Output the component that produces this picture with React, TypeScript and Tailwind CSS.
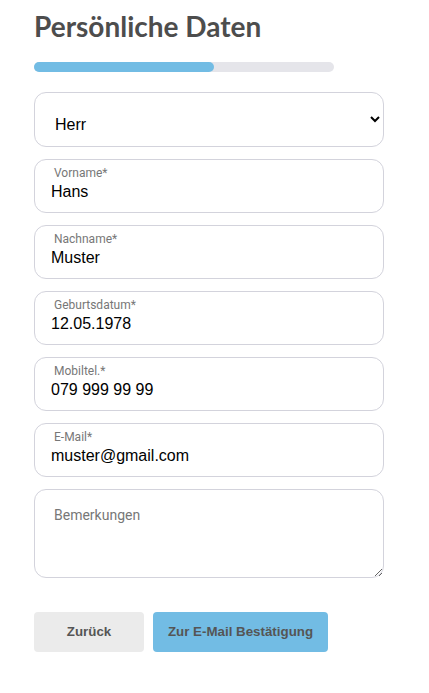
import { useState } from "react"

const fields = [
  { label: "Vorname*", value: "Hans" },
  { label: "Nachname*", value: "Muster" },
  { label: "Geburtsdatum*", value: "12.05.1978" },
  { label: "Mobiltel.*", value: "079 999 99 99" },
  { label: "E-Mail*", value: "muster@gmail.com" },
]

function Field({ label, value }: { label: string; value: string }) {
  const [val, setVal] = useState(value)
  return (
    <div className="flex flex-col h-[54px] rounded-xl border border-[#d3d3dc] bg-white pl-4 pr-4 pt-1">
      <label className="ml-[3px] text-[12px] leading-[18px] text-[#777] font-['Roboto',sans-serif]">{label}</label>
      <input
        value={val}
        onChange={(e) => setVal(e.target.value)}
        className="h-5 text-[16px] leading-5 text-black outline-none font-['Liberation_Sans',Arial,sans-serif]"
      />
    </div>
  )
}

export default function App() {
  const [anrede, setAnrede] = useState("Herr")

  return (
    <div className="min-h-screen bg-white px-[34px] pt-[8px] pb-10">
      <h1 className="text-[28px] leading-9 font-bold text-[#4d4d4d] font-['Lato',sans-serif]">
        Persönliche Daten
      </h1>

      <div className="mt-[18px] h-[10px] w-[300px] rounded-full bg-[#e5e5ea]">
        <div className="h-full w-[60%] rounded-full bg-[#72bce4]"></div>
      </div>

      <form className="mt-[20px] flex w-[350px] flex-col gap-3">
        <select
          value={anrede}
          onChange={(e) => setAnrede(e.target.value)}
          className="h-[55px] rounded-xl border border-[#d3d3dc] bg-white pl-[16px] pr-1 pt-[17px] pb-[7px] text-[16px] text-black outline-none font-['Liberation_Sans',Arial,sans-serif]"
        >
          <option>Herr</option>
          <option>Frau</option>
        </select>

        {fields.map((f) => (
          <Field key={f.label} label={f.label} value={f.value} />
        ))}

        <textarea
          placeholder="Bemerkungen"
          className="h-[89px] rounded-xl border border-[#d3d3dc] bg-white pl-[19px] pr-4 pt-[15px] text-[14px] leading-5 text-black outline-none placeholder:text-[#777] font-['Roboto',sans-serif]"
        ></textarea>

        <div className="mt-[22px] flex gap-[9px]">
          <button
            type="button"
            className="h-10 w-[110px] rounded bg-[#ebebeb] text-[13.33px] font-bold text-[#555] font-['Liberation_Sans',Arial,sans-serif]"
          >
            Zurück
          </button>
          <button
            type="button"
            className="h-10 w-[175px] rounded bg-[#72bce4] text-[13.33px] font-bold text-[#555] font-['Liberation_Sans',Arial,sans-serif]"
          >
            Zur E-Mail Bestätigung
          </button>
        </div>
      </form>
    </div>
  )
}
